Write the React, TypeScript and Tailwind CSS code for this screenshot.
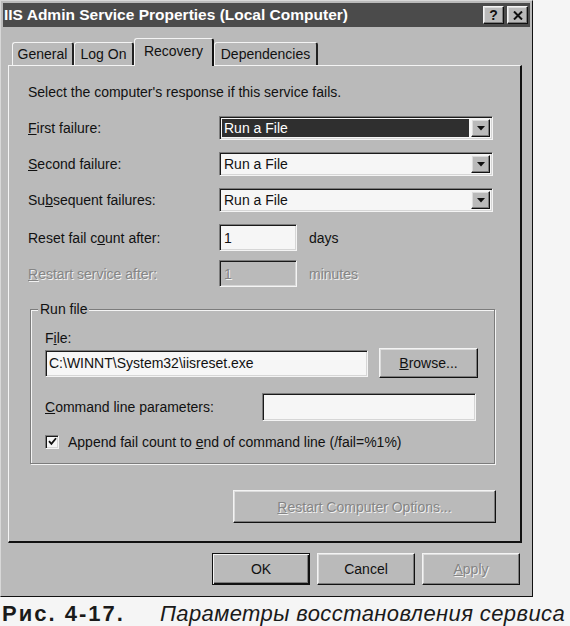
import React from "react";

// win2k bevels, grey-scanned
const raised =
  "border border-t-[#f4f4f4] border-l-[#f4f4f4] border-r-[#111] border-b-[#111] shadow-[inset_-1px_-1px_0_#7c7c7c,inset_1px_1px_0_#dcdcdc]";
const sunken =
  "border border-t-[#7c7c7c] border-l-[#7c7c7c] border-r-[#f4f4f4] border-b-[#f4f4f4] shadow-[inset_1px_1px_0_#1a1a1a,inset_-1px_-1px_0_#d6d6d6]";
const dim = "text-[#858585] [text-shadow:1px_1px_0_#f2f2f2]";

function DropButton() {
  return (
    <div className={`${raised} bg-[#bababa] w-[19px] h-full flex items-center justify-center`}>
      <svg width="8" height="5" viewBox="0 0 8 5">
        <path d="M0 0h8L4 4.5z" fill="#111" />
      </svg>
    </div>
  );
}

function Combo({ focused = false }: { focused?: boolean }) {
  return (
    <div className={`${sunken} h-[24px] flex bg-[#f6f6f6] p-[2px]`}>
      <div className="flex-1 flex items-stretch pr-[2px]">
        {focused ? (
          <span className="flex-1 flex items-center bg-[#2f2f2f] text-white pl-[2px]">Run a File</span>
        ) : (
          <span className="flex items-center pl-[2px]">Run a File</span>
        )}
      </div>
      <DropButton />
    </div>
  );
}

function Row({ label, children }: { label: React.ReactNode; children: React.ReactNode }) {
  return (
    <div className="flex items-center">
      <div className="w-[191px] shrink-0">{label}</div>
      <div className="flex-1">{children}</div>
    </div>
  );
}

function Tab({ label, selected = false, w }: { label: string; selected?: boolean; w: string }) {
  if (selected) {
    return (
      <div
        className={`${w} h-[28px] -mb-px relative z-10 bg-[#bababa] border-t border-l border-t-[#f4f4f4] border-l-[#f4f4f4] border-r-2 border-r-[#111] rounded-t-[3px] flex justify-center pt-[4px]`}
      >
        {label}
      </div>
    );
  }
  return (
    <div
      className={`${w} h-[23px] border-t border-l border-t-[#f4f4f4] border-l-[#f4f4f4] border-r-2 border-r-[#222] rounded-t-[3px] flex justify-center pt-[3px]`}
    >
      {label}
    </div>
  );
}

export default function App() {
  return (
    <div className="w-[570px] h-[626px] bg-[#f5f5f5] overflow-hidden font-['Liberation_Sans',Arial,sans-serif] text-[14px] leading-[16px] text-[#111]">
      <div className="w-[533px] h-[597px] bg-[#bababa] border border-t-[#d8d8d8] border-l-[#d8d8d8] border-r-[#111] border-b-[#111] p-[2px] flex flex-col">
        {/* title bar */}
        <div className="h-[24px] bg-[#4b4b4b] flex items-center pl-[1px] pr-[2px]">
          <span className="flex-1 text-white font-bold text-[15.5px] leading-[18px]">
            IIS Admin Service Properties (Local Computer)
          </span>
          <div className="flex gap-[3px]">
            <div className={`${raised} bg-[#bababa] w-[21px] h-[18px] flex items-center justify-center font-bold text-[14px] leading-none`}>
              ?
            </div>
            <div className={`${raised} bg-[#bababa] w-[21px] h-[18px] flex items-center justify-center`}>
              <svg width="10" height="9" viewBox="0 0 10 9">
                <path d="M1 0.5l8 8M9 0.5l-8 8" stroke="#111" strokeWidth="2" />
              </svg>
            </div>
          </div>
        </div>

        {/* tabs */}
        <div className="mt-[10px] h-[28px] flex items-end pl-[9px]">
          <Tab label="General" w="w-[62px]" />
          <Tab label="Log On" w="w-[60px]" />
          <Tab label="Recovery" w="w-[80px]" selected />
          <Tab label="Dependencies" w="w-[104px]" />
        </div>

        {/* panel */}
        <div className="ml-[5px] mr-[8px] h-[478px] border border-t-[#f4f4f4] border-l-[#f4f4f4] border-r-2 border-r-[#111] border-b-2 border-b-[#111] pl-[19px] pr-[27px] pt-[18px] flex flex-col">
          <div>Select the computer's response if this service fails.</div>

          <div className="mt-[16px] flex flex-col gap-[12px]">
            <Row label={<span><u>F</u>irst failure:</span>}>
              <Combo focused />
            </Row>
            <Row label={<span><u>S</u>econd failure:</span>}>
              <Combo />
            </Row>
            <Row label={<span>Su<u>b</u>sequent failures:</span>}>
              <Combo />
            </Row>
            <Row label={<span>Reset fail c<u>o</u>unt after:</span>}>
              <div className="flex items-center">
                <div className={`${sunken} w-[78px] h-[27px] bg-[#f6f6f6] flex items-center pl-[4px]`}>1</div>
                <span className="ml-[12px]">days</span>
              </div>
            </Row>
          </div>

          <div className="mt-[9px]">
            <Row label={<span className={dim}><u>R</u>estart service after:</span>}>
              <div className="flex items-center">
                <div className={`${sunken} w-[78px] h-[27px] bg-[#bababa] flex items-center pl-[4px]`}>
                  <span className={dim}>1</span>
                </div>
                <span className={`ml-[12px] ${dim}`}>minutes</span>
              </div>
            </Row>
          </div>

          <fieldset className="mt-[14px] ml-[2px] -mr-[2px] border border-[#7c7c7c] shadow-[1px_1px_0_#f4f4f4,inset_1px_1px_0_#f4f4f4] px-[14px] pr-[16px] pb-[14px]">
            <legend className="-ml-[7px] px-[2px] bg-[#bababa]">Run file</legend>
            <div className="mt-[13px]">F<u>i</u>le:</div>
            <div className="mt-[2px] h-[30px] flex items-center">
              <div className={`${sunken} w-[323px] h-[27px] bg-[#f6f6f6] flex items-center pl-[3px]`}>
                C:\WINNT\System32\iisreset.exe
              </div>
              <div className={`${raised} ml-[11px] w-[99px] h-[30px] flex items-center justify-center`}>
                <span><u>B</u>rowse...</span>
              </div>
            </div>
            <div className="mt-[15px] h-[28px] flex items-center">
              <div className="w-[217px]"><u>C</u>ommand line parameters:</div>
              <div className={`${sunken} w-[214px] h-[28px] bg-[#f6f6f6]`} />
            </div>
            <div className="mt-[13px] h-[15px] flex items-center">
              <div className={`${sunken} w-[14px] h-[14px] bg-[#f6f6f6] flex items-center justify-center`}>
                <svg width="9" height="9" viewBox="0 0 9 9">
                  <path d="M1 4.2l2.4 2.6L8 1.2" stroke="#111" strokeWidth="1.8" fill="none" />
                </svg>
              </div>
              <span className="ml-[9px]">Append fail count to <u>e</u>nd of command line (/fail=%1%)</span>
            </div>
          </fieldset>

          <div className={`${raised} mt-[26px] self-end -mr-[3px] w-[263px] h-[33px] flex items-center justify-center`}>
            <span className={dim}><u>R</u>estart Computer Options...</span>
          </div>
        </div>

        {/* buttons */}
        <div className="mt-[10px] flex justify-end gap-[7px] pr-[10px]">
          <div className="w-[98px] h-[32px] border border-[#111] shadow-[inset_1px_1px_0_#f4f4f4,inset_-1px_-1px_0_#111,inset_-2px_-2px_0_#7c7c7c] flex items-center justify-center">
            OK
          </div>
          <div className={`${raised} w-[98px] h-[32px] flex items-center justify-center`}>Cancel</div>
          <div className={`${raised} w-[98px] h-[32px] flex items-center justify-center`}>
            <span className={dim}><u>A</u>pply</span>
          </div>
        </div>
      </div>

      {/* caption */}
      <div className="mt-[4px] pl-[2px] flex items-baseline text-[22px] leading-[26px] text-[#1a1a1a]">
        <span className="font-bold tracking-[2px] w-[158px]">Рис. 4-17.</span>
        <span className="italic tracking-[0.4px]">Параметры восстановления сервиса</span>
      </div>
    </div>
  );
}
